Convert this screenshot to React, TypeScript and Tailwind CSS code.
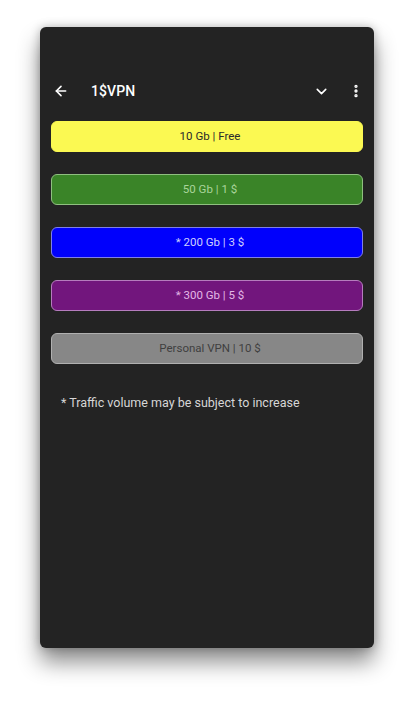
import { ArrowLeft, ChevronDown, EllipsisVertical } from 'lucide-react';

const plans = [
  { label: '10 Gb | Free', cls: 'bg-[#fbf952] text-[#2a2a2a] border-[#fbf952]' },
  { label: '50 Gb | 1 $', cls: 'bg-[#3a8428] text-[#a9d49a] border-[#8fbf80]' },
  { label: '* 200 Gb | 3 $', cls: 'bg-[#0000fc] text-[#cfd0ff] border-[#7f7fe8]' },
  { label: '* 300 Gb | 5 $', cls: 'bg-[#72167d] text-[#e2b8e6] border-[#b57cbd]' },
  { label: 'Personal VPN | 10 $', cls: 'bg-[#878787] text-[#3f3f3f] border-[#b0b0b0]' },
];

const App = () => {
  return (
    <div className="min-h-screen bg-white flex justify-center pt-[27px] font-['Roboto',sans-serif]">
      {/* Phone frame */}
      <div className="w-[334px] h-[621px] bg-[#232323] rounded-[6px] shadow-[0_14px_22px_rgba(0,0,0,0.45),0_0_10px_rgba(0,0,0,0.25)] flex flex-col">
        {/* Toolbar */}
        <div className="flex items-center h-[30px] mt-[49px] pl-[13px] pr-[10px] text-white">
          <ArrowLeft size={16} strokeWidth={2.4} />
          <span className="ml-[22px] text-[14px] font-medium tracking-[0.1px]">1$VPN</span>
          <div className="flex-1" />
          <ChevronDown size={17} strokeWidth={2.2} />
          <EllipsisVertical size={16} strokeWidth={3} className="ml-[18px]" />
        </div>

        {/* Plans */}
        <div className="flex flex-col gap-[22px] px-[11px] mt-[15px]">
          {plans.map((p) => (
            <button
              key={p.label}
              className={`h-[31px] w-full rounded-[6px] border text-[11.5px] pl-[6px] flex items-center justify-center ${p.cls}`}
            >
              {p.label}
            </button>
          ))}
        </div>

        <p className="mt-[30px] ml-[21px] text-[12.5px] text-[#d6d6d6]">* Traffic volume may be subject to increase</p>
      </div>
    </div>
  );
};

export default App;
